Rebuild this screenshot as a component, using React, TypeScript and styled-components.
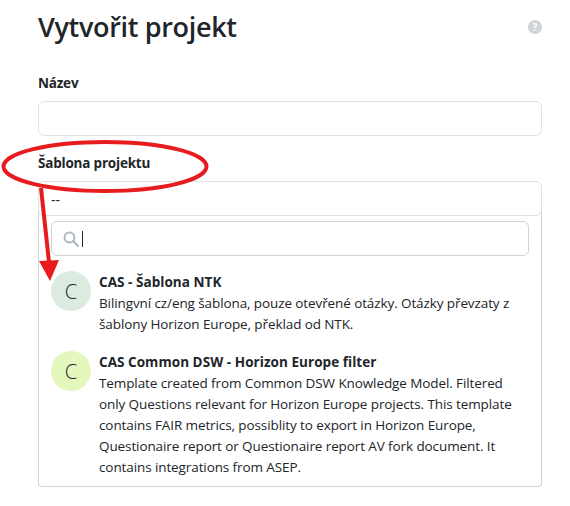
import React from 'react';
import styled, { createGlobalStyle } from 'styled-components';

const GlobalStyle = createGlobalStyle`
  html, body {
    margin: 0;
    background: #fff;
  }

  body {
    color: #212529;
    font-family: "Open Sans", "Noto Sans", sans-serif;
  }
`;

const Page = styled.div`
  height: 506px;
  overflow: hidden;
  padding: 0 28px 0 38px;
  position: relative;
  width: 570px;
  box-sizing: border-box;
`;

const Header = styled.header`
  align-items: center;
  display: flex;
  height: 54px;
  justify-content: space-between;
  margin-bottom: 19px;
`;

const Title = styled.h1`
  font-size: 27px;
  font-weight: 600;
  letter-spacing: -0.33px;
  line-height: 54px;
  margin: 0;
`;

const HelpIcon = styled.span`
  align-items: center;
  background: #ced4da;
  border-radius: 50%;
  color: #fff;
  display: flex;
  font-size: 10px;
  font-weight: 700;
  height: 14px;
  justify-content: center;
  width: 14px;
`;

const Field = styled.div`
  margin-bottom: 17px;
`;

const Label = styled.label`
  display: block;
  font-size: 13.5px;
  font-weight: 700;
  letter-spacing: -0.2px;
  line-height: 20px;
  margin-bottom: 8px;
`;

const TextBox = styled.div`
  background: #fff;
  border: 1px solid #dee2e6;
  border-radius: 6px;
  box-sizing: border-box;
  height: 35px;
  width: 504px;
`;

const SelectBox = styled(TextBox)`
  font-size: 14px;
  line-height: 35px;
  padding-left: 12px;
  position: relative;
  z-index: 1;
`;

const Dropdown = styled.div`
  border: 1px solid #ced4da;
  border-radius: 0 0 4px 4px;
  border-top: 0;
  box-sizing: border-box;
  height: 276px;
  margin-top: -5px;
  padding: 10px 12px 0;
  width: 504px;
`;

const SearchBox = styled.div`
  align-items: center;
  border: 1px solid #ced4da;
  border-radius: 6px;
  box-sizing: border-box;
  color: #adb5bd;
  display: flex;
  gap: 3px;
  height: 35px;
  padding-left: 11px;
`;

const Caret = styled.span`
  background: #212529;
  height: 16px;
  width: 1px;
`;

const Options = styled.ul`
  display: flex;
  flex-direction: column;
  gap: 16px;
  list-style: none;
  margin: 15px 0 0;
  padding: 0;
`;

const Option = styled.li`
  display: flex;
  gap: 8px;
`;

const Avatar = styled.span<{ $color: string }>`
  align-items: center;
  background: ${({ $color }) => $color};
  border-radius: 50%;
  display: flex;
  flex: none;
  font-size: 20px;
  font-weight: 300;
  height: 40px;
  justify-content: center;
  width: 40px;
`;

const OptionBody = styled.div`
  font-size: 13.5px;
  letter-spacing: -0.1px;
  line-height: 21px;
  margin-top: 1px;
`;

const OptionName = styled.strong`
  display: block;
  font-weight: 700;
  letter-spacing: 0.05px;
`;

const Annotation = styled.svg`
  height: 506px;
  left: 0;
  pointer-events: none;
  position: absolute;
  top: 0;
  width: 570px;
  z-index: 2;
`;

const SearchIcon = () => (
  <svg width="16" height="16" viewBox="0 0 16 16" fill="none" stroke="currentColor" strokeWidth="2">
    <circle cx="6.5" cy="6.5" r="5" />
    <path d="M10.5 10.5 15 15" strokeLinecap="round" />
  </svg>
);

export default function App() {
  return (
    <Page>
      <GlobalStyle />
      <Header>
        <Title>Vytvořit projekt</Title>
        <HelpIcon>?</HelpIcon>
      </Header>
      <Field>
        <Label>Název</Label>
        <TextBox />
      </Field>
      <Field>
        <Label>Šablona projektu</Label>
        <SelectBox>--</SelectBox>
        <Dropdown>
          <SearchBox>
            <SearchIcon />
            <Caret />
          </SearchBox>
          <Options>
            <Option>
              <Avatar $color="#dcebdf">C</Avatar>
              <OptionBody>
                <OptionName>CAS - Šablona NTK</OptionName>
                Bilingvní cz/eng šablona, pouze otevřené otázky. Otázky převzaty z šablony Horizon Europe, překlad od NTK.
              </OptionBody>
            </Option>
            <Option>
              <Avatar $color="#e4f7bd">C</Avatar>
              <OptionBody>
                <OptionName>CAS Common DSW - Horizon Europe filter</OptionName>
                Template created from Common DSW Knowledge Model. Filtered only Questions relevant for Horizon Europe projects. This template contains FAIR metrics, possiblity to export in Horizon Europe, Questionaire report or Questionaire report AV fork document. It contains integrations from ASEP.
              </OptionBody>
            </Option>
          </Options>
        </Dropdown>
      </Field>
      <Annotation viewBox="0 0 570 506">
        <ellipse cx="105" cy="166.5" rx="101.5" ry="24.5" fill="none" stroke="#e81c1f" strokeWidth="4" />
        <path d="M41 188 49 262" fill="none" stroke="#e81c1f" strokeWidth="4" />
        <path d="M39 261 59 260 50 281Z" fill="#e81c1f" />
      </Annotation>
    </Page>
  );
}
